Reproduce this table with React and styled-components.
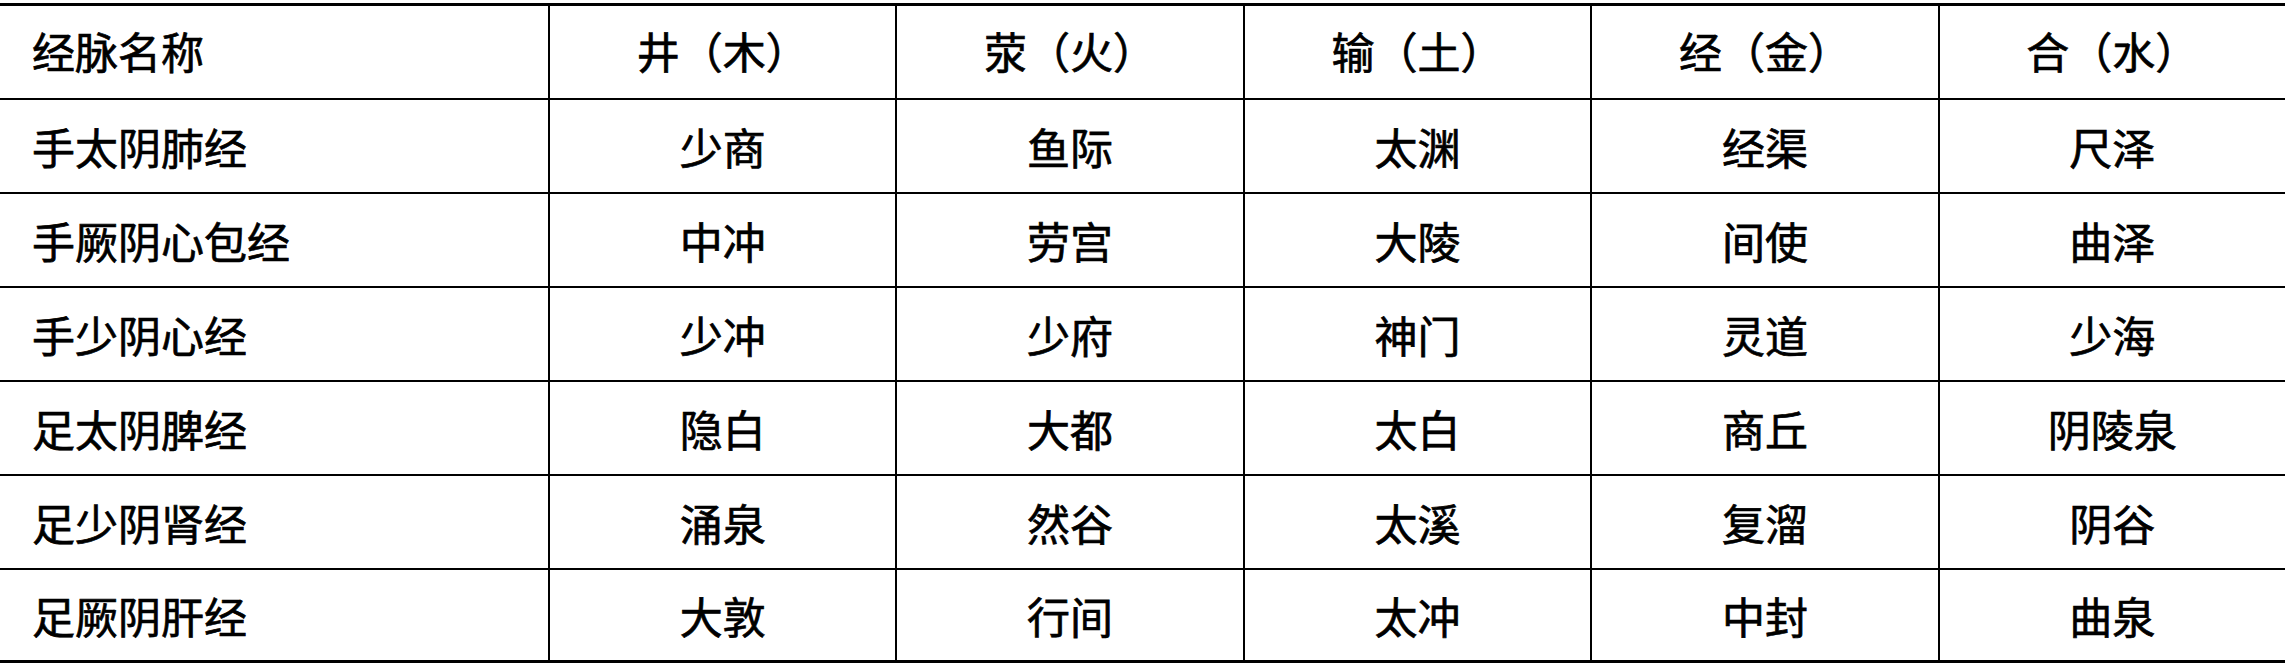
import React from "react";
import styled, { createGlobalStyle } from "styled-components";

const GlobalStyle = createGlobalStyle`
  html, body {
    margin: 0;
    padding: 0;
    background: #fff;
  }
  body {
    font-family: "Noto Sans CJK SC", "Noto Sans", sans-serif;
    color: #000;
  }
`;

const header = ["经脉名称", "井（木）", "荥（火）", "输（土）", "经（金）", "合（水）"];

const rows = [
  ["手太阴肺经", "少商", "鱼际", "太渊", "经渠", "尺泽"],
  ["手厥阴心包经", "中冲", "劳宫", "大陵", "间使", "曲泽"],
  ["手少阴心经", "少冲", "少府", "神门", "灵道", "少海"],
  ["足太阴脾经", "隐白", "大都", "太白", "商丘", "阴陵泉"],
  ["足少阴肾经", "涌泉", "然谷", "太溪", "复溜", "阴谷"],
  ["足厥阴肝经", "大敦", "行间", "太冲", "中封", "曲泉"],
];

const Table = styled.div`
  width: 2285px;
  margin-top: 3px;
  border-top: 3px solid #000;
  border-bottom: 3px solid #000;
`;

const Row = styled.div`
  display: grid;
  grid-template-columns: 548px repeat(5, 1fr);
  height: ${(p) => (p.$last ? "90px" : "92px")};
  border-bottom: ${(p) => (p.$last ? "none" : "2px solid #000")};
`;

const Cell = styled.div`
  display: flex;
  align-items: center;
  justify-content: ${(p) => (p.$first ? "flex-start" : "center")};
  padding-left: ${(p) => (p.$first ? "32px" : "0")};
  padding-bottom: ${(p) => (p.$head ? "4px" : "0")};
  border-left: ${(p) => (p.$first ? "none" : "2px solid #000")};
  font-size: 43px;
  line-height: 1;
  white-space: nowrap;
  -webkit-text-stroke: 0.7px #000;
`;

export default function App() {
  const all = [header, ...rows];
  return (
    <>
      <GlobalStyle />
      <Table>
        {all.map((r, i) => (
          <Row key={i} $last={i === all.length - 1}>
            {r.map((c, j) => (
              <Cell key={j} $first={j === 0} $head={i === 0}>
                {c}
              </Cell>
            ))}
          </Row>
        ))}
      </Table>
    </>
  );
}
